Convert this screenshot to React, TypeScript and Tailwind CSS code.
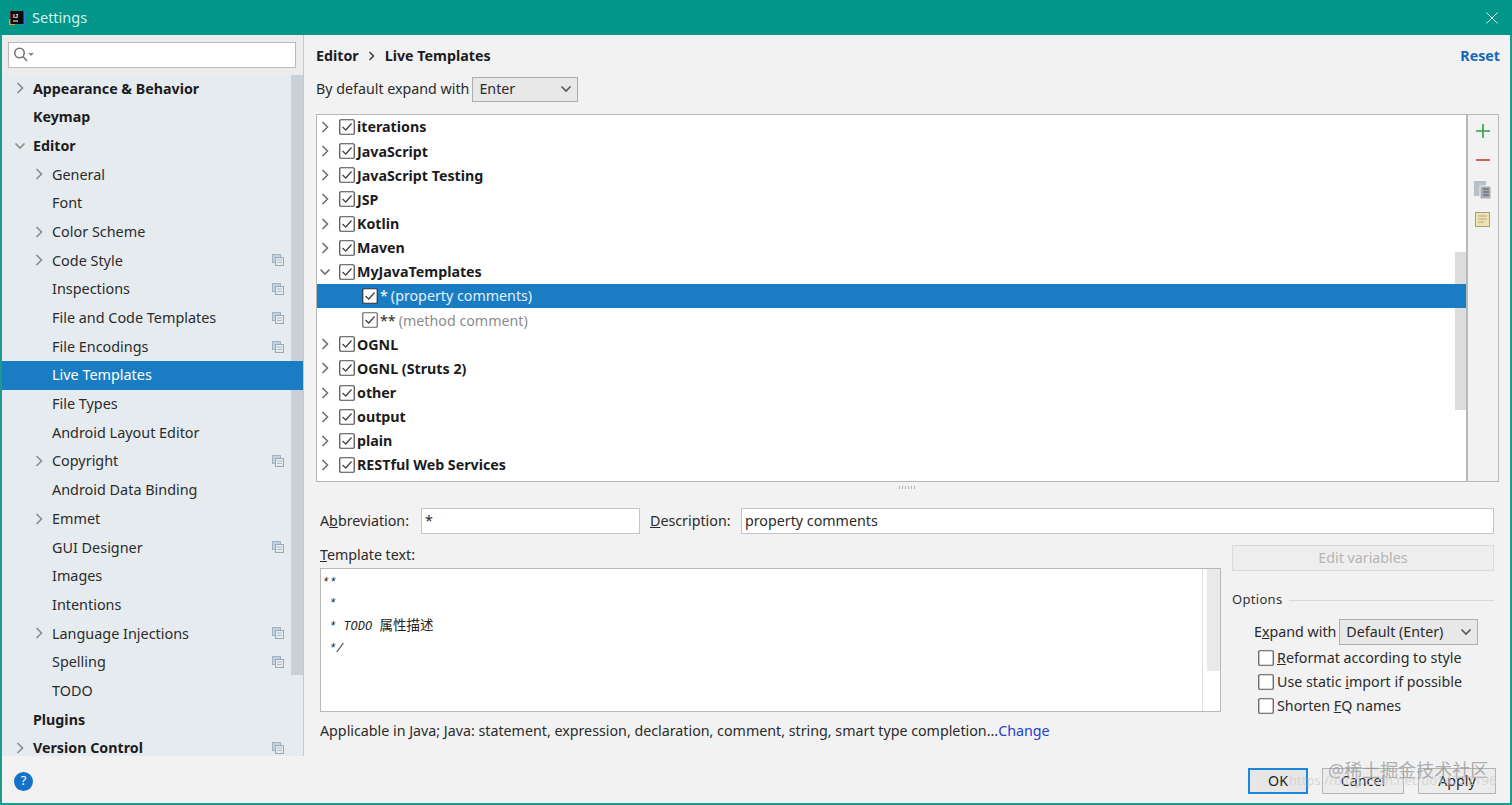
import React from "react";

const font = { fontFamily: '"Noto Sans", "Noto Sans CJK SC", sans-serif' };

const Chevron = ({ down = false, color = "#8a8a8a" }: { down?: boolean; color?: string }) => (
  <svg width="12" height="12" viewBox="0 0 12 12" fill="none" stroke={color} strokeWidth="1.6">
    {down ? <path d="M1.5 3.5 L6 8 L10.5 3.5" /> : <path d="M3.5 1 L8.5 6 L3.5 11" />}
  </svg>
);

const Copy = () => (
  <svg width="12" height="12" viewBox="0 0 12 12" className="shrink-0">
    <rect x="0.5" y="0.5" width="8" height="8" fill="#c4d0dc" stroke="#9fb3c4" />
    <rect x="3.5" y="3.5" width="8" height="8" fill="#e6ebf0" stroke="#9aa9b6" />
    <path d="M5 8.5 H10 M5 6 H10" stroke="#b0bcc6" />
  </svg>
);

const Check = ({ checked = true, border = "#4a4a4a", bg = "#fff" }: { checked?: boolean; border?: string; bg?: string }) => (
  <svg width="16" height="16" viewBox="0 0 16 16" className="shrink-0">
    <rect x="0.75" y="0.75" width="14.5" height="14.5" rx="1" fill={bg} stroke={border} strokeWidth="1.2" />
    {checked && <path d="M3.5 8 L6.8 11 L12.5 4.5" fill="none" stroke="#444" strokeWidth="1.3" />}
  </svg>
);

type Side = { t: string; lvl: 0 | 1; arrow?: "r" | "d"; copy?: boolean; sel?: boolean };
const side: Side[] = [
  { t: "Appearance & Behavior", lvl: 0, arrow: "r" },
  { t: "Keymap", lvl: 0 },
  { t: "Editor", lvl: 0, arrow: "d" },
  { t: "General", lvl: 1, arrow: "r" },
  { t: "Font", lvl: 1 },
  { t: "Color Scheme", lvl: 1, arrow: "r" },
  { t: "Code Style", lvl: 1, arrow: "r", copy: true },
  { t: "Inspections", lvl: 1, copy: true },
  { t: "File and Code Templates", lvl: 1, copy: true },
  { t: "File Encodings", lvl: 1, copy: true },
  { t: "Live Templates", lvl: 1, sel: true },
  { t: "File Types", lvl: 1 },
  { t: "Android Layout Editor", lvl: 1 },
  { t: "Copyright", lvl: 1, arrow: "r", copy: true },
  { t: "Android Data Binding", lvl: 1 },
  { t: "Emmet", lvl: 1, arrow: "r" },
  { t: "GUI Designer", lvl: 1, copy: true },
  { t: "Images", lvl: 1 },
  { t: "Intentions", lvl: 1 },
  { t: "Language Injections", lvl: 1, arrow: "r", copy: true },
  { t: "Spelling", lvl: 1, copy: true },
  { t: "TODO", lvl: 1 },
  { t: "Plugins", lvl: 0 },
  { t: "Version Control", lvl: 0, arrow: "r", copy: true },
];

type Row = { t: string; sub?: string; open?: boolean; child?: boolean; sel?: boolean };
const rows: Row[] = [
  { t: "iterations" },
  { t: "JavaScript" },
  { t: "JavaScript Testing" },
  { t: "JSP" },
  { t: "Kotlin" },
  { t: "Maven" },
  { t: "MyJavaTemplates", open: true },
  { t: "*", sub: "(property comments)", child: true, sel: true },
  { t: "**", sub: "(method comment)", child: true },
  { t: "OGNL" },
  { t: "OGNL (Struts 2)" },
  { t: "other" },
  { t: "output" },
  { t: "plain" },
  { t: "RESTful Web Services" },
];

const SideRow = ({ r }: { r: Side }) => (
  <div className={`relative flex h-[28.7px] shrink-0 items-center pr-[20px] ${r.sel ? "bg-[#1a7dc4] text-white" : "text-[#2b2b2b]"}`}>
    {r.arrow && (
      <span className={`absolute flex ${r.lvl === 0 ? "left-[12px]" : "left-[31px]"}`}>
        <Chevron down={r.arrow === "d"} />
      </span>
    )}
    <span className={r.lvl === 0 ? "ml-[31px] text-[14.25px] font-bold text-[#1c1c1c]" : "ml-[50px] text-[14.4px]"}>{r.t}</span>
    {r.copy && (
      <span className="absolute left-[270px] flex">
        <Copy />
      </span>
    )}
  </div>
);

const TreeRow = ({ r }: { r: Row }) => (
  <div className={`relative flex h-[24.15px] shrink-0 items-center ${r.sel ? "bg-[#1a7dc4]" : ""}`}>
    {r.child ? (
      <div className="ml-[45px] flex items-center gap-[2px]">
        <Check border={r.sel ? "#333" : "#666"} />
        <span className={`text-[14.25px] ${r.sel ? "text-white" : "text-[#2b2b2b]"}`}>{r.t}</span>
        <span className={`ml-px text-[14.25px] ${r.sel ? "text-[#e3effa]" : "text-[#8c8c8c]"}`}>{r.sub}</span>
      </div>
    ) : (
      <div className="flex items-center">
        <span className="flex w-[22px] justify-start pl-[2px]">
          <Chevron down={r.open} color="#6f6f6f" />
        </span>
        <Check />
        <span className="ml-[2px] text-[14.25px] font-bold text-[#1c1c1c]">{r.t}</span>
      </div>
    )}
  </div>
);

const Opt = ({ children }: { children: React.ReactNode }) => (
  <div className="flex h-[24px] items-center gap-[3px] text-[14.25px] text-[#2b2b2b]">
    <Check checked={false} border="#555" />
    <span>{children}</span>
  </div>
);

const Btn = ({ children, w, primary = false }: { children: React.ReactNode; w: string; primary?: boolean }) => (
  <div
    className={`flex h-[26px] items-center justify-center text-[14.25px] text-[#222] ${w} ${
      primary ? "border-2 border-[#1a86dc] bg-[#e6e6e6]" : "border border-[#b4b4b4] bg-[#ececec]"
    }`}
  >
    {children}
  </div>
);

export default function App() {
  return (
    <div style={font} className="flex h-[805px] w-[1512px] flex-col overflow-hidden bg-[#f2f2f2]">
      {/* title bar */}
      <div className="flex h-[35px] shrink-0 items-center bg-[#00968a] pl-[9px] pr-[14px]">
        <svg width="16" height="16" viewBox="0 0 16 16" className="shrink-0">
          <rect x="0" y="1" width="6" height="14" fill="#c2375f" />
          <rect x="0" y="9" width="6" height="6" fill="#e0a030" />
          <rect x="10" y="2" width="6" height="13" fill="#2f7fd6" />
          <rect x="1.5" y="1" width="13" height="13" fill="#0b0b0b" />
          <text x="4" y="8" fontSize="6" fontWeight="700" fill="#fff" fontFamily="Liberation Sans">IJ</text>
          <rect x="4" y="10.5" width="5" height="1" fill="#fff" />
        </svg>
        <span className="ml-[7px] text-[14.5px] text-[#d8f2ee]">Settings</span>
        <svg width="12" height="12" viewBox="0 0 12 12" className="ml-auto" stroke="#e6f5f3" strokeWidth="1">
          <path d="M0.5 0.5 L11.5 11.5 M11.5 0.5 L0.5 11.5" />
        </svg>
      </div>

      {/* content */}
      <div className="flex min-h-0 flex-1 flex-col border-x-2 border-b-2 border-x-[#1c9a8e] border-b-[#1c9a8e]">
        <div className="flex min-h-0 flex-1">
          {/* sidebar */}
          <div className="relative flex w-[302px] shrink-0 flex-col border-r border-[#c9c9c9] bg-[#e6ebf0]">
            <div className="absolute left-[289px] top-[40px] h-[600px] w-[12px] bg-[#c9d0d6]" />
            <div className="relative h-[39px] shrink-0 bg-[#ececec] pl-[6px] pr-[6px] pt-[7px]">
              <div className="flex h-[26px] w-[288px] items-center border border-[#b9b9b9] bg-white pl-[5px]">
                <svg width="21" height="16" viewBox="0 0 21 16" fill="none" stroke="#777" strokeWidth="1.6">
                  <circle cx="5.5" cy="6" r="4.7" />
                  <path d="M9 9.5 L13 14" />
                  <path d="M14 6 H20 L17 9 Z" fill="#888" stroke="none" />
                </svg>
              </div>
            </div>
            <div className="flex min-h-0 flex-1 flex-col overflow-hidden">
              {side.map((r) => (
                <SideRow key={r.t} r={r} />
              ))}
            </div>
          </div>

          {/* right pane */}
          <div className="flex min-w-0 flex-1 flex-col pl-[12px] pr-[11px]">
            <div className="-mr-px flex h-[40px] shrink-0 items-center pt-px text-[14.25px] font-bold text-[#1c1c1c]">
              <span>Editor</span>
              <svg width="8" height="10" viewBox="0 0 8 10" fill="none" stroke="#333" strokeWidth="1.4" className="mx-[9px]">
                <path d="M1.5 1 L5.5 5 L1.5 9" />
              </svg>
              <span>Live Templates</span>
              <span className="ml-auto text-[#1567b8]">Reset</span>
            </div>
            <div className="flex h-[28px] shrink-0 items-center gap-[3px] text-[14.25px] text-[#2b2b2b]">
              <span>By default expand with</span>
              <div className="flex h-[25px] w-[106px] items-center justify-between border border-[#adadad] bg-[#e8e8e8] pl-[6px] pr-[5px]">
                <span>Enter</span>
                <Chevron down color="#555" />
              </div>
            </div>

            {/* template tree */}
            <div className="mt-[11px] flex h-[368px] shrink-0 border border-[#b8b8b8] bg-white">
              <div className="relative min-w-0 flex-1 overflow-hidden">
                <div className="absolute right-0 top-[137px] h-[158px] w-[11px] bg-[#dcdcdc]" />
                {rows.map((r) => (
                  <TreeRow key={r.t} r={r} />
                ))}
              </div>
              <div className="flex w-[32px] shrink-0 flex-col items-center gap-[13px] border-l-2 border-[#b8b8b8] bg-[#f2f2f2] pr-px pt-[8px]">
                <svg width="16" height="16" viewBox="0 0 16 16" stroke="#2ea043" strokeWidth="1.6">
                  <path d="M8 1 V15 M1 8 H15" />
                </svg>
                <svg width="16" height="16" viewBox="0 0 16 16" stroke="#d0392e" strokeWidth="1.6">
                  <path d="M1 8 H15" />
                </svg>
                <svg width="17" height="18" viewBox="0 0 17 18">
                  <rect x="0" y="0" width="12" height="15" fill="#b8c0c8" />
                  <rect x="6" y="5" width="11" height="13" fill="#a6adb4" stroke="#f2f2f2" />
                  <path d="M9 8 H15 M9 11 H15 M9 14 H15" stroke="#4f555a" />
                </svg>
                <svg width="15" height="15" viewBox="0 0 15 15">
                  <rect x="0.5" y="0.5" width="14" height="14" fill="#efe3b4" stroke="#a89f80" />
                  <path d="M3 4 H12 M3 7 H12 M3 10 H9" stroke="#b5a878" />
                </svg>
              </div>
            </div>

            {/* splitter grip */}
            <div className="flex h-[10px] shrink-0 items-center justify-center">
              <div className="h-[3px] w-[18px] bg-[repeating-linear-gradient(90deg,#b5b5b5_0,#b5b5b5_1px,transparent_1px,transparent_3px)]" />
            </div>

            {/* abbreviation */}
            <div className="mt-[16px] flex h-[26px] shrink-0 items-center pl-[4px] pr-[5px] text-[14.25px] text-[#2b2b2b]">
              <span className="w-[101px] shrink-0">A<u>b</u>breviation:</span>
              <div className="flex h-[26px] w-[219px] shrink-0 items-center border border-[#c4c4c4] bg-white pl-[3px]">*</div>
              <span className="ml-[10px] w-[91px] shrink-0"><u>D</u>escription:</span>
              <div className="flex h-[26px] flex-1 items-center border border-[#c4c4c4] bg-white pl-[3px]">property comments</div>
            </div>

            {/* template + options */}
            <div className="mt-[11px] flex h-[178px] shrink-0">
              <div className="flex w-[905px] shrink-0 flex-col pl-[4px]">
                <div className="flex h-[23px] shrink-0 items-center pb-[4px] text-[14.25px] text-[#2b2b2b]">
                  <span><u>T</u>emplate text:</span>
                </div>
                <div className="flex h-[144px] shrink-0 border border-[#b8b8b8] bg-white">
                  <div
                    style={{ fontFamily: '"Liberation Mono", "Noto Sans CJK SC", monospace' }}
                    className="min-w-0 flex-1 pt-[4px] text-[12px] font-medium italic leading-[21.2px] text-[#222]"
                  >
                    <div className="pl-px">**</div>
                    <div className="pl-[8px]">*</div>
                    <div className="pl-[8px]">
                      * TODO <span style={font} className="text-[13.5px] font-normal not-italic text-[#222]">属性描述</span>
                    </div>
                    <div className="pl-[8px]">*/</div>
                  </div>
                  <div className="h-full w-[18px] shrink-0 border-l border-[#e0e0e0] pl-[4px]">
                    <div className="h-[102px] w-[13px] bg-[#e9e9e9]" />
                  </div>
                </div>
              </div>
              <div className="ml-[11px] flex min-w-0 flex-1 flex-col pr-[5px]">
                <div className="flex h-[26px] shrink-0 items-center justify-center border border-[#dadada] bg-[#eeeeee] text-[14.25px] text-[#b5b5b5]">
                  Edit variables
                </div>
                <div className="mt-[19px] flex h-[20px] shrink-0 items-center gap-[7px]">
                  <span className="text-[13px] tracking-[0.3px] text-[#333]">Options</span>
                  <div className="h-px flex-1 bg-[#d9d9d9]" />
                </div>
                <div className="ml-[22px] mt-[9px] flex h-[26px] shrink-0 items-center gap-[3px] text-[14.25px] text-[#2b2b2b]">
                  <span>E<u>x</u>pand with</span>
                  <div className="flex h-[26px] w-[139px] items-center justify-between border border-[#adadad] bg-[#e8e8e8] pl-[6px] pr-[5px]">
                    <span>Default (Enter)</span>
                    <Chevron down color="#555" />
                  </div>
                </div>
                <div className="ml-[26px] mt-px flex flex-col">
                  <Opt><u>R</u>eformat according to style</Opt>
                  <Opt>Use static <u>i</u>mport if possible</Opt>
                  <Opt>Shorten <u>F</u>Q names</Opt>
                </div>
              </div>
            </div>

            <div className="mt-[-4px] flex h-[24px] shrink-0 items-center pl-[4px] text-[14.25px] text-[#2b2b2b]">
              <span>Applicable in Java; Java: statement, expression, declaration, comment, string, smart type completion...</span>
              <span className="text-[#1f3fd0]">Change</span>
            </div>
          </div>
        </div>

        {/* bottom bar */}
        <div className="relative flex h-[47px] shrink-0 items-center bg-[#f2f2f2] pl-[12px] pr-[14px] pt-[3px]">
          <div className="flex h-[19px] w-[19px] items-center justify-center rounded-full bg-[#1472c8] text-[13px] text-white">?</div>
          <div className="ml-auto flex items-center gap-[14px]">
            <Btn w="w-[60px]" primary>OK</Btn>
            <Btn w="w-[82px]">Cancel</Btn>
            <Btn w="w-[78px]">Apply</Btn>
          </div>
          {/* watermark */}
          <span className="absolute left-[1326px] top-[1px] text-[18px] text-[#8f8f8f]/70">@稀土掘金技术社区</span>
          <span className="absolute left-[1287px] top-[15px] text-[13px] text-[#cfcfcf]/80">https://blog.csdn.net/u014722196</span>
        </div>
      </div>
    </div>
  );
}
